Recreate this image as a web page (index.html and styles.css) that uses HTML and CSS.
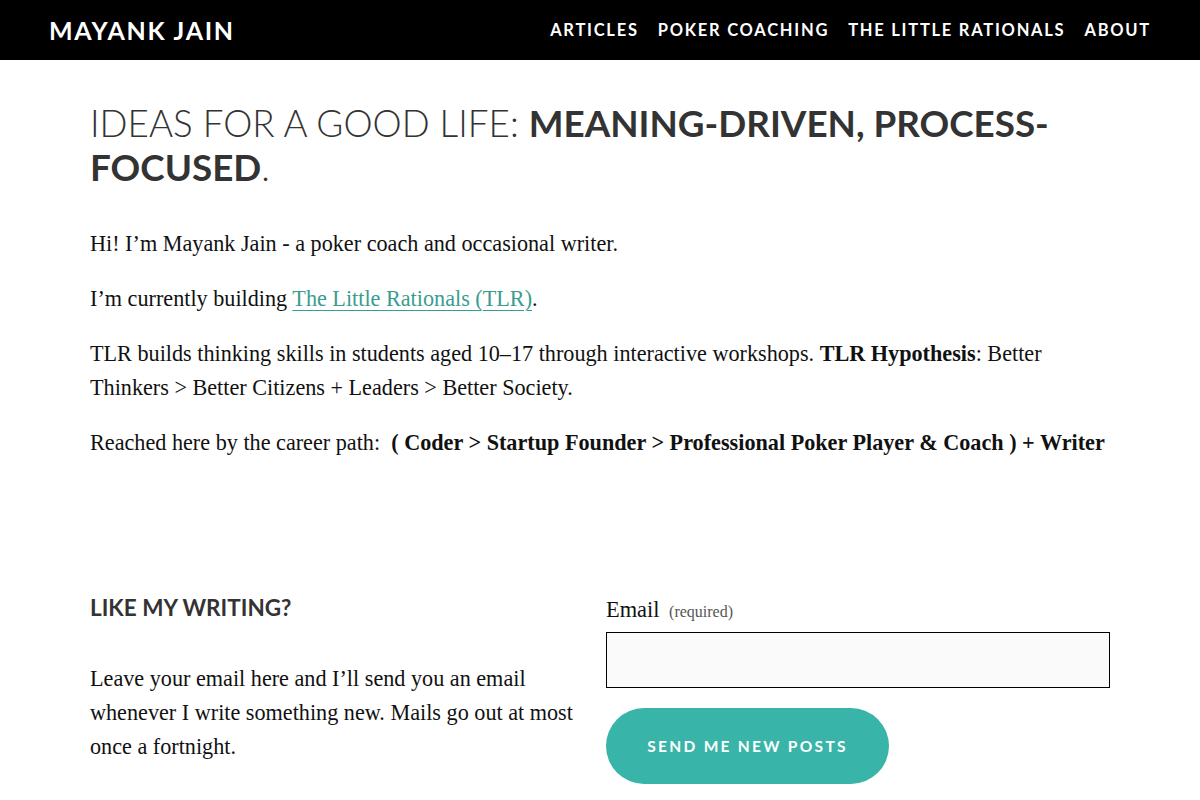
FILE: index.html
```html
<!DOCTYPE html>
<html lang="en">
<head>
    <meta charset="UTF-8">
    <meta name="viewport" content="width=device-width, initial-scale=1.0">
    <title>Mayank Jain</title>
    <link rel="stylesheet" href="styles.css">
</head>
<body>
    <header class="site-header">
        <a class="site-title" href="#">MAYANK JAIN</a>
        <nav class="nav">
            <a href="#">Articles</a>
            <a href="#">Poker Coaching</a>
            <a href="#">The Little Rationals</a>
            <a href="#">About</a>
        </nav>
    </header>

    <main class="content">
        <h1 class="intro-title">Ideas for a good life: <strong>Meaning-driven, Process-focused</strong>.</h1>

        <p>Hi! I’m Mayank Jain - a poker coach and occasional writer.</p>
        <p>I’m currently building <a class="link" href="#">The Little Rationals (TLR)</a>.</p>
        <p>TLR builds thinking skills in students aged 10–17 through interactive workshops. <strong>TLR Hypothesis</strong>: Better Thinkers &gt; Better Citizens + Leaders &gt; Better Society.</p>
        <p>Reached here by the career path:&nbsp; <strong>( Coder &gt; Startup Founder &gt; Professional Poker Player &amp; Coach ) + Writer</strong></p>

        <section class="subscribe">
            <div class="subscribe-text">
                <h2>Like my writing?</h2>
                <p>Leave your email here and I’ll send you an email whenever I write something new. Mails go out at most once a fortnight.</p>
            </div>
            <form class="subscribe-form" onsubmit="return false;">
                <label class="field-label" for="email">Email <span class="required">(required)</span></label>
                <input class="field-input" type="email" id="email">
                <button class="btn-send" type="submit">Send me new posts</button>
            </form>
        </section>
    </main>
</body>
</html>
```

FILE: styles.css
```css
body {
    margin: 0;
    font-family: 'Liberation Serif', 'Times New Roman', serif;
    color: #111;
    background: #fff;
}
a { text-decoration: none; color: inherit; }

.site-header {
    height: 60px;
    box-sizing: border-box;
    background: #000;
    display: flex;
    align-items: center;
    justify-content: space-between;
    padding: 0 49px 1px;
}
.site-title {
    font-family: Lato, 'Open Sans', sans-serif;
    font-size: 25px;
    font-weight: 700;
    letter-spacing: 1.7px;
    color: #fff;
}
.nav {
    display: flex;
    gap: 19px;
}
.nav a {
    font-family: Lato, 'Open Sans', sans-serif;
    font-size: 16.5px;
    font-weight: 700;
    letter-spacing: 1.75px;
    text-transform: uppercase;
    color: #fff;
}

.content {
    width: 1020px;
    margin: 0 auto;
    padding-top: 41px;
}
.intro-title {
    font-family: Lato, 'Open Sans', sans-serif;
    font-weight: 300;
    font-size: 36.8px;
    line-height: 44px;
    text-transform: uppercase;
    color: #333;
    margin: 0 0 38px;
}
.intro-title strong { font-weight: 700; }

.content p {
    font-size: 22.2px;
    line-height: 34px;
    margin: 0 0 21px;
}
.link {
    color: #3a9c8f;
    text-decoration: underline;
    text-decoration-thickness: 1px;
    text-underline-offset: 4px;
}

.subscribe {
    display: grid;
    grid-template-columns: 500px 504px;
    column-gap: 16px;
    margin-top: 136px;
}
.subscribe h2 {
    font-family: Lato, 'Open Sans', sans-serif;
    font-size: 22.5px;
    font-weight: 700;
    text-transform: uppercase;
    color: #333;
    margin: -2px 0 41px;
}
.subscribe-text p { margin: 0; }

.subscribe-form {
    display: flex;
    flex-direction: column;
    align-items: flex-start;
}
.field-label {
    font-size: 22.4px;
    line-height: 28px;
    margin-bottom: 6px;
}
.required {
    font-size: 16px;
    color: #555;
    margin-left: 4px;
}
.field-input {
    box-sizing: border-box;
    width: 504px;
    height: 56px;
    border: 1px solid #000;
    background: #fafafa;
    margin: 0 0 20px;
}
.btn-send {
    width: 283px;
    height: 76px;
    border: none;
    border-radius: 38px;
    background: #38b5a8;
    color: #fff;
    font-family: Lato, 'Open Sans', sans-serif;
    font-size: 15.5px;
    font-weight: 700;
    letter-spacing: 2.3px;
    text-transform: uppercase;
    cursor: pointer;
}
```
